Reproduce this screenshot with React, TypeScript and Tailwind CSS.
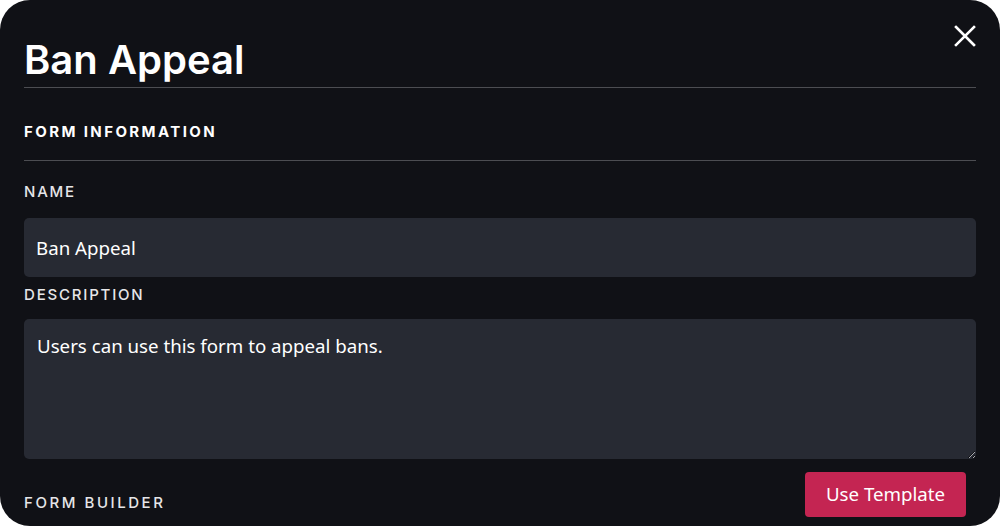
import React, { useState } from "react";

const sans = "font-['Inter',sans-serif]";
const ui = "font-['Noto_Sans','Open_Sans',sans-serif]";

const Label = ({ children, wide }: { children: React.ReactNode; wide?: boolean }) => (
  <div
    className={`${sans} text-[15px] font-medium uppercase text-[#e6e6e8] ${
      wide ? "tracking-[0.17em]" : "tracking-[0.12em]"
    }`}
  >
    {children}
  </div>
);

export default function App() {
  const [name, setName] = useState("Ban Appeal");
  const [desc, setDesc] = useState("Users can use this form to appeal bans.");

  return (
    <div className="h-[526px] w-[1000px] bg-white">
      <div className="relative h-full w-full overflow-hidden rounded-[30px] bg-[#101116] px-6">
        {/* Close */}
        <button className="absolute right-[24px] top-[25px] text-white">
          <svg width="22" height="22" viewBox="0 0 22 22" fill="none" stroke="currentColor" strokeWidth="2.6" strokeLinecap="square">
            <path d="M2 2L20 20M20 2L2 20" />
          </svg>
        </button>

        <h1 className={`${sans} border-b border-[#4c4d52] pb-[4px] pt-[37px] text-[40px] font-semibold leading-[46px] text-white`}>
          Ban Appeal
        </h1>

        <div className={`${sans} border-b border-[#4c4d52] pb-[16px] pt-[32px] text-[15px] font-bold uppercase leading-[24px] tracking-[0.16em] text-white`}>
          Form Information
        </div>

        <div className="pt-[20px]">
          <Label>Name</Label>
          <input
            value={name}
            onChange={(e) => setName(e.target.value)}
            className={`${ui} mt-[14px] block h-[59px] w-full rounded-[5px] bg-[#272a33] px-3 text-[18.7px] text-white outline-none`}
          />
        </div>

        <div className="pt-[7px]">
          <Label>Description</Label>
          <textarea
            value={desc}
            onChange={(e) => setDesc(e.target.value)}
            className={`${ui} mt-[13px] block h-[140px] w-full resize-y rounded-[5px] bg-[#272a33] px-[13px] pb-[10px] pt-[13px] text-[18.7px] text-white outline-none`}
          />
        </div>

        <div className="mt-[14px] flex items-start justify-between pr-[10px]">
          <div className="pt-[19px]">
            <Label wide>Form Builder</Label>
          </div>
          <button className={`${ui} -mt-px h-[45px] w-[161px] rounded-[4px] bg-[#c42552] text-[18.7px] text-white`}>
            Use Template
          </button>
        </div>
      </div>
    </div>
  );
}
